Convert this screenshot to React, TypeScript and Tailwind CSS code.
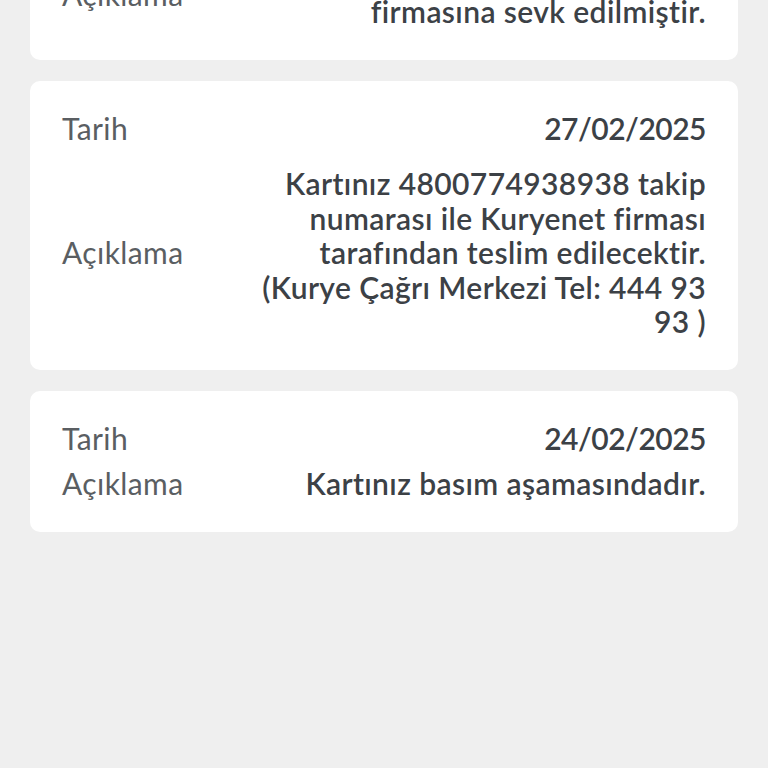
type Entry = {
  date: string;
  text: string;
  gap: string;
};

const entries: Entry[] = [
  {
    date: '03/03/2025',
    text: 'Kartınız dağıtım için kurye firmasına sevk edilmiştir.',
    gap: 'gap-[21px]',
  },
  {
    date: '27/02/2025',
    text: 'Kartınız 4800774938938 takip numarası ile Kuryenet firması tarafından teslim edilecektir. (Kurye Çağrı Merkezi Tel: 444 93 93 )',
    gap: 'gap-[21px]',
  },
  {
    date: '24/02/2025',
    text: 'Kartınız basım aşamasındadır.',
    gap: 'gap-[11px]',
  },
];

function Row({ label, value, date }: { label: string; value: string; date?: boolean }) {
  return (
    <div className="flex items-center justify-between">
      <span className="shrink-0 tracking-[0.4px] text-[#5a5e62]">{label}</span>
      <span
        className={`max-w-[452px] text-right font-semibold text-[#3c4146] ${
          date ? 'tracking-[-0.5px]' : 'tracking-[0.4px]'
        }`}
      >
        {value}
      </span>
    </div>
  );
}

export default function App() {
  return (
    <div
      className="h-screen overflow-hidden bg-[#efefef] text-[30px] leading-[34.5px]"
      style={{ fontFamily: 'Lato, "Noto Sans", sans-serif' }}
    >
      <div className="-mt-[126px] flex flex-col gap-[21px] px-[30px]">
        {entries.map((entry, i) => (
          <div key={i} className={`flex flex-col rounded-[10px] bg-white px-[32px] pt-[30px] pb-[31px] ${entry.gap}`}>
            <Row label="Tarih" value={entry.date} date />
            <Row label="Açıklama" value={entry.text} />
          </div>
        ))}
      </div>
    </div>
  );
}
